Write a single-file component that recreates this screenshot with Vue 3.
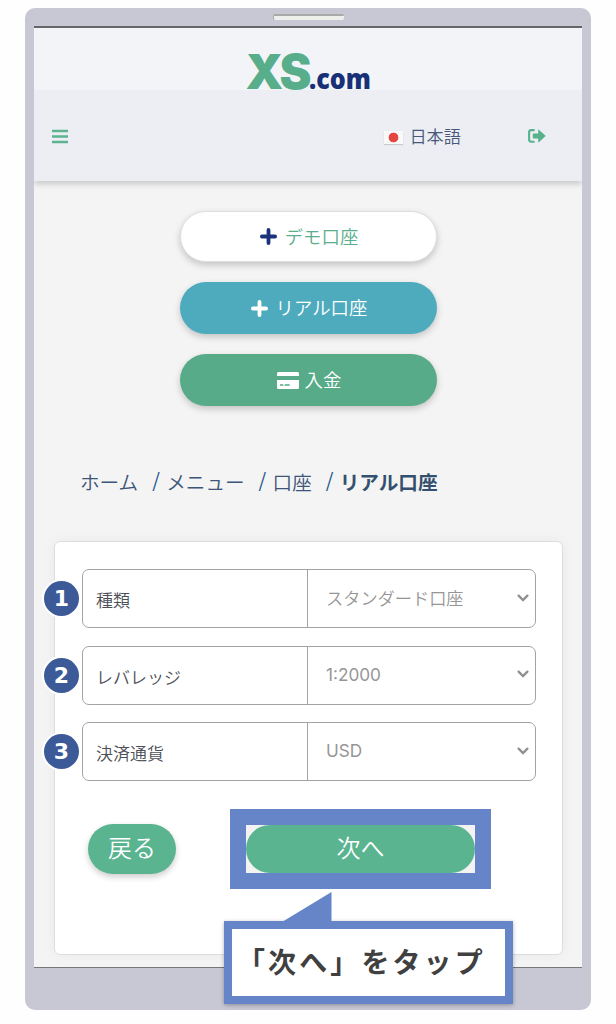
<template>
  <div class="page">
    <div class="phone">
      <div class="speaker"></div>
      <div class="screen">
        <header>
          <div class="brand">
            <svg class="logo" width="128" height="40" viewBox="0 0 128 40">
              <text class="logo-xs" x="-0.5" y="37" textLength="63" lengthAdjust="spacingAndGlyphs">XS</text>
              <text class="logo-com" x="63" y="37" textLength="62" lengthAdjust="spacingAndGlyphs">.com</text>
            </svg>
          </div>
          <nav class="toolbar">
            <svg class="burger" width="16" height="15" viewBox="0 0 16 15">
              <path d="M0 2h16M0 7.5h16M0 13h16" stroke="#5fb391" stroke-width="2.5" />
            </svg>
            <div class="lang">
              <span class="flag"></span>
              <span>日本語</span>
            </div>
            <svg class="logout" width="18" height="14" viewBox="0 0 18 14">
              <path d="M6.6 1.1H3.2Q1.1 1.1 1.1 3.2v7.4q0 2.1 2.1 2.1h3.4" fill="none" stroke="#57b28b" stroke-width="2.1" />
              <path d="M5.4 4.5h4.8V1.2q0-1 .9-.3l6 5.3q.7.7 0 1.4l-6 5.3q-.9.7-.9-.3V9.4H5.4q-.6 0-.6-.6V5.1q0-.6.6-.6z" fill="#57b28b" />
            </svg>
          </nav>
        </header>

        <div class="actions">
          <button class="pill demo">
            <svg width="17" height="17" viewBox="0 0 17 17"><path d="M8.5 1.9v13.2M1.9 8.5h13.2" /></svg>
            <span>デモ口座</span>
          </button>
          <button class="pill real">
            <svg width="17" height="17" viewBox="0 0 17 17"><path d="M8.5 1.9v13.2M1.9 8.5h13.2" /></svg>
            <span>リアル口座</span>
          </button>
          <button class="pill deposit">
            <svg class="card-icon" width="22" height="17" viewBox="0 0 22 17">
              <path d="M1.5 0h19q1.5 0 1.5 1.5V4H0V1.5Q0 0 1.5 0zM0 8h22v7.5q0 1.5-1.5 1.5h-19Q0 17 0 15.5z" fill="#fff" />
              <path class="card-lines" d="M3 13h3.4M7.7 13h5" />
            </svg>
            <span>入金</span>
          </button>
        </div>

        <div class="breadcrumb">
          <template v-for="(item, i) in crumbs" :key="item">
            <span v-if="i > 0" class="slash">/</span>
            <span :class="{ current: i === crumbs.length - 1 }">{{ item }}</span>
          </template>
        </div>

        <div class="card">
          <div v-for="(field, i) in fields" :key="field.label" class="field">
            <span class="badge">{{ i + 1 }}</span>
            <div class="label">{{ field.label }}</div>
            <div class="value" :class="{ latin: field.latin }">
              <span>{{ field.value }}</span>
              <svg width="12" height="8" viewBox="0 0 12 8">
                <path d="M1.6 1.6L6 6l4.4-4.4" fill="none" stroke="#8f8f8f" stroke-width="2.3" stroke-linecap="round" />
              </svg>
            </div>
          </div>
          <div class="buttons">
            <button class="back">戻る</button>
            <div class="highlight">
              <button class="next">次へ</button>
            </div>
          </div>
        </div>
      </div>
    </div>

    <!-- tooltip over the phone -->
    <div class="callout">
      <svg class="pointer" width="50" height="30" viewBox="0 0 50 30"><path d="M0 30L49.5 0v30z" fill="#6685c9" /></svg>
      <span>「次へ」をタップ</span>
    </div>
  </div>
</template>

<script setup>
const crumbs = ['ホーム', 'メニュー', '口座', 'リアル口座']

const fields = [
  { label: '種類', value: 'スタンダード口座' },
  { label: 'レバレッジ', value: '1:2000', latin: true },
  { label: '決済通貨', value: 'USD', latin: true }
]
</script>

<style>
body {
  margin: 0;
  background: #fdfefd;
}
</style>

<style scoped>
.page {
  position: relative;
  width: 616px;
  height: 1024px;
  padding: 8px 25px 0;
  box-sizing: border-box;
  overflow: hidden;
  font-family: "Noto Sans CJK JP", sans-serif;
  font-weight: 350;
}
.phone {
  width: 566px;
  height: 1002px;
  box-sizing: border-box;
  padding: 6px 9px 0;
  border-radius: 10px;
  background: #c8c7d4;
}
.speaker {
  width: 71px;
  height: 6px;
  margin: 0 auto 6px;
  box-sizing: border-box;
  border-top: 2px solid #aaa9aa;
  border-left: 1px solid #aaa9aa;
  border-radius: 2px;
  background: #eeeeea;
}
.screen {
  height: 942px;
  box-sizing: border-box;
  border-top: 2px solid #66666a;
  border-bottom: 1px solid #77777b;
  background: #f4f4f4;
}
header {
  height: 153px;
  background: #edeef3;
  box-shadow: 0 3px 6px rgba(0, 0, 0, 0.18);
  clip-path: inset(0 0 -12px 0);
}
.brand {
  height: 62px;
  background: #f3f4f8;
}
.logo {
  display: block;
  margin-left: 212px;
  padding-top: 24px;
  overflow: visible;
}
.logo-xs {
  font: 900 48px Inter, sans-serif;
  letter-spacing: -3px;
  fill: #58ae8b;
}
.logo-com {
  font: 800 29px "Open Sans", sans-serif;
  fill: #173077;
}
.toolbar {
  display: flex;
  align-items: center;
  height: 91px;
  padding: 0 36px 0 18px;
}
.burger {
  margin-top: 2px;
  margin-right: auto;
}
.lang {
  display: flex;
  align-items: center;
  gap: 6px;
  margin-right: 67px;
  font-size: 17.2px;
  color: #46597a;
}
.flag {
  width: 19px;
  height: 13px;
  margin-top: 3px;
  background: radial-gradient(circle, #e64640 4.5px, #f9f9f9 5.2px);
  box-shadow: 0 1px 1px rgba(0, 0, 0, 0.15);
}
.logout {
  margin-top: 1px;
}
.actions {
  display: flex;
  flex-direction: column;
  align-items: center;
  gap: 20px;
  padding: 30px 0 0;
}
button {
  border: none;
  padding: 0;
  font-family: inherit;
  font-weight: 350;
  color: #fff;
}
.pill {
  display: flex;
  align-items: center;
  justify-content: center;
  gap: 8px;
  width: 257px;
  height: 52px;
  border-radius: 26px;
  padding-left: 2px;
  font-size: 18.4px;
  line-height: 26px;
  box-shadow: 0 3px 7px rgba(0, 0, 0, 0.2);
}
.pill span {
  padding-bottom: 2px;
}
.pill path {
  stroke-linecap: round;
}
.demo {
  height: 51px;
  border: 1px solid #dedee2;
  background: #fff;
  color: #5bae8b;
}
.pill svg {
  fill: none;
  stroke: #fff;
  stroke-width: 3.8;
}
.pill.demo svg {
  stroke: #1b337c;
}
.real {
  background: #4eaabd;
}
.deposit {
  gap: 6px;
  background: #58ab88;
}
.pill .card-icon {
  stroke: none;
}
.pill .card-lines {
  stroke: #58ab88;
  stroke-width: 1.7;
  stroke-linecap: butt;
}
.breadcrumb {
  display: flex;
  align-items: center;
  height: 30px;
  margin: 60px 0 0 46px;
  font-size: 19.6px;
  color: #3d5578;
}
.slash {
  width: 7px;
  margin: -3px 7px 0 14px;
  color: #29548c;
  font-weight: 400;
}
.current {
  font-weight: 700;
  color: #34506f;
}
.card {
  width: 509px;
  height: 414px;
  box-sizing: border-box;
  margin: 45px 0 0 20px;
  padding: 27px 27px 0 27px;
  border: 1px solid #dddddf;
  border-radius: 6px;
  background: #fff;
  box-shadow: 0 0 14px rgba(0, 0, 0, 0.05);
}
.field {
  position: relative;
  display: flex;
  width: 454px;
  height: 59px;
  box-sizing: border-box;
  margin-bottom: 17.5px;
  border: 1.4px solid #a3a3a3;
  border-radius: 7px;
}
.badge {
  position: absolute;
  left: -39px;
  top: 11px;
  width: 35px;
  height: 35px;
  border-radius: 50%;
  background: #3c5a97;
  box-shadow: 0 0 0 2px #fff;
  color: #fff;
  font: bold 22px/35px "DejaVu Sans", sans-serif;
  text-align: center;
}
.label {
  display: flex;
  align-items: center;
  width: 225px;
  padding: 2px 0 0 13px;
  box-sizing: border-box;
  border-right: 1px solid #a3a3a3;
  font-size: 17px;
  color: #4c4f57;
}
.value {
  display: flex;
  flex: 1;
  align-items: center;
  justify-content: space-between;
  padding: 0 6px 2px 18px;
  font-size: 17.2px;
  color: #969696;
}
.latin {
  font-family: Inter, sans-serif;
  font-weight: 400;
}
.buttons {
  display: flex;
  align-items: center;
  padding: 10px 0 0 6px;
}
.back {
  width: 88px;
  height: 50px;
  border-radius: 25px;
  background: #5ab490;
  box-shadow: 0 3px 6px rgba(0, 0, 0, 0.2);
  font-size: 24px;
  line-height: 46px;
  padding-bottom: 3px;
}
.highlight {
  width: 261px;
  height: 80px;
  margin-left: 54px;
  box-sizing: border-box;
  border: 16px solid #6685c9;
  background: #f3f3f3;
}
.next {
  display: block;
  width: 229px;
  height: 48px;
  border-radius: 24px;
  background: #5ab490;
  font-size: 24px;
  line-height: 44px;
  padding-bottom: 3px;
}
.callout {
  position: absolute;
  left: 224px;
  top: 921px;
  width: 289px;
  height: 83px;
  box-sizing: border-box;
  border: 8px solid #6685c9;
  background: #fff;
  box-shadow: 0 1px 4px rgba(0, 0, 0, 0.3);
  font-size: 28px;
  font-weight: 700;
  line-height: 65px;
  letter-spacing: 3.1px;
  color: #404040;
  white-space: nowrap;
}
.callout span {
  margin-left: 5px;
}
.pointer {
  position: absolute;
  left: 50px;
  top: -37px;
}
</style>
